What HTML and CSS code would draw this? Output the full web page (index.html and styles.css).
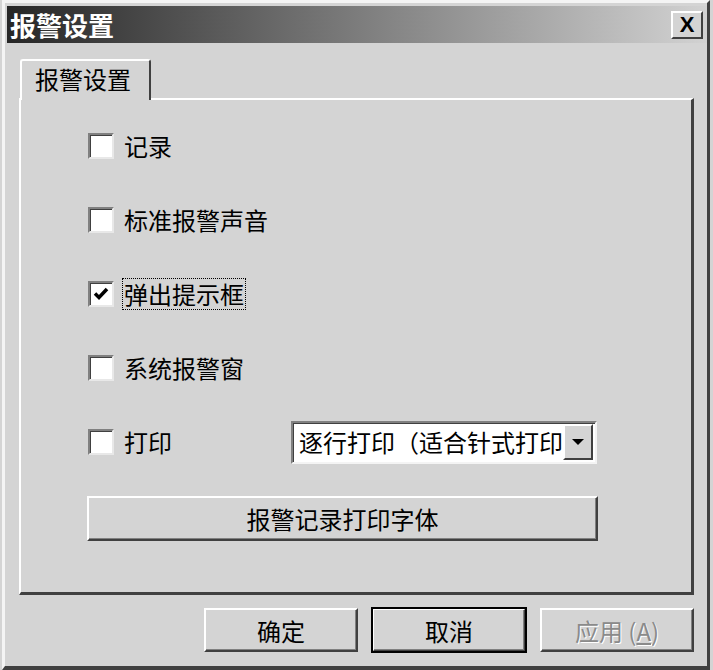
FILE: index.html
```html
<!DOCTYPE html>
<html>

<head>
  <title>报警设置</title>
  <meta charset="utf-8" />
  <link rel="stylesheet" href="styles.css">
</head>

<body>
  <div class="window">
    <div class="titlebar">
      <span class="title-text">报警设置</span>
      <button class="close-button">X</button>
    </div>

    <div class="content">
      <div class="tabs">
        <div class="tab active-tab">报警设置</div>
      </div>

      <div class="panel">
        <div class="row">
          <span class="checkbox"></span>
          <span class="label">记录</span>
        </div>
        <div class="row">
          <span class="checkbox"></span>
          <span class="label">标准报警声音</span>
        </div>
        <div class="row">
          <span class="checkbox checked">
            <svg width="16" height="14" viewBox="0 0 16 14">
              <polyline points="2,6.5 6,10.5 14,2" fill="none" stroke="#000" stroke-width="3.5" />
            </svg>
          </span>
          <span class="label focused">弹出提示框</span>
        </div>
        <div class="row">
          <span class="checkbox"></span>
          <span class="label">系统报警窗</span>
        </div>
        <div class="row">
          <span class="checkbox"></span>
          <span class="label print-label">打印</span>
          <div class="select">
            <span class="select-text">逐行打印（适合针式打印机）</span>
            <span class="select-button">
              <svg width="12" height="7" viewBox="0 0 12 7">
                <path d="M0 0 H12 L6 6 Z" fill="#000" />
              </svg>
            </span>
          </div>
        </div>
        <button class="wide-button">报警记录打印字体</button>
      </div>

      <div class="footer">
        <button class="button">确定</button>
        <button class="button default-button">取消</button>
        <button class="button disabled-button">应用 (<u>A</u>)</button>
      </div>
    </div>
  </div>
</body>

</html>
```

FILE: styles.css
```css
html,
body {
  margin: 0;
  padding: 0;
  background-color: #d4d4d4;
}

body {
  font-family: "Noto Sans CJK SC", "Liberation Sans", sans-serif;
  font-size: 24px;
  color: #000000;
}

.window {
  box-sizing: border-box;
  width: 708px;
  height: 670px;
  margin-left: 2px;
  border-top: 3px solid #f4f4f4;
  border-left: 3px solid #f4f4f4;
  border-right: 3px solid #404040;
  border-bottom: 4px solid #404040;
  padding: 3px 0 0 2px;
  background: #d4d4d4;
}

.titlebar {
  display: flex;
  align-items: center;
  justify-content: space-between;
  height: 37px;
  padding: 0 4px 0 3px;
  background: linear-gradient(to right, #262626 0%, #5a5a5a 30%, #d2d2d2 100%);
}

.title-text {
  color: #ffffff;
  font-size: 26px;
  font-weight: bold;
  line-height: 37px;
}

.close-button {
  box-sizing: border-box;
  width: 32px;
  height: 28px;
  padding: 0;
  background: #d4d4d4;
  border: 2px solid;
  border-color: #ffffff #404040 #404040 #ffffff;
  font-family: "Liberation Sans", sans-serif;
  font-size: 22px;
  font-weight: bold;
  line-height: 22px;
  color: #000000;
}

.content {
  padding: 16px 0 0 12px;
}

.tabs {
  display: flex;
  position: relative;
  z-index: 1;
  margin-left: 1px;
  margin-bottom: -2px;
}

.tab {
  box-sizing: border-box;
  width: 131px;
  height: 41px;
  padding-left: 13px;
  line-height: 36px;
  background: #d4d4d4;
  border-top: 2px solid #ffffff;
  border-left: 2px solid #ffffff;
  border-right: 2px solid #404040;
  border-top-left-radius: 3px;
  border-top-right-radius: 3px;
}

.panel {
  box-sizing: border-box;
  width: 675px;
  height: 497px;
  padding: 9px 0 0 67px;
  border-top: 2px solid #ffffff;
  border-left: 2px solid #ffffff;
  border-right: 3px solid #404040;
  border-bottom: 3px solid #404040;
}

.row {
  display: flex;
  align-items: center;
  height: 74px;
}

.checkbox {
  box-sizing: border-box;
  display: flex;
  align-items: center;
  justify-content: center;
  width: 26px;
  height: 26px;
  background: #ffffff;
  border: 2px solid;
  border-color: #808080 #e8e8e8 #e8e8e8 #808080;
  box-shadow: inset 1px 1px 0 #404040;
}

.label {
  margin-left: 10px;
  line-height: 28px;
}

.focused {
  outline: 1px dotted #000000;
  outline-offset: 1px;
}

.print-label {
  width: 167px;
}

.select {
  box-sizing: border-box;
  display: flex;
  align-items: center;
  width: 306px;
  height: 43px;
  background: #ffffff;
  border: 2px solid;
  border-color: #808080 #f4f4f4 #f4f4f4 #808080;
  box-shadow: inset 1px 1px 0 #404040;
  padding: 0 2px 0 6px;
}

.select-text {
  flex: 1;
  overflow: hidden;
  white-space: nowrap;
  line-height: 36px;
}

.select-button {
  box-sizing: border-box;
  display: flex;
  align-items: center;
  justify-content: center;
  width: 30px;
  height: 36px;
  background: #d4d4d4;
  border: 2px solid;
  border-color: #ffffff #404040 #404040 #ffffff;
}

.wide-button {
  box-sizing: border-box;
  display: block;
  width: 511px;
  height: 45px;
  margin: 17px 0 0 -1px;
  background: #d4d4d4;
  border: 2px solid;
  border-color: #ffffff #404040 #404040 #ffffff;
  box-shadow: inset -1px -1px 0 #808080;
  font-family: "Noto Sans CJK SC", sans-serif;
  font-size: 24px;
  color: #000000;
  padding: 0;
}

.footer {
  display: flex;
  justify-content: flex-end;
  gap: 14px;
  width: 675px;
  padding-top: 13px;
}

.button {
  box-sizing: border-box;
  width: 154px;
  height: 44px;
  padding: 0;
  background: #d4d4d4;
  border: 2px solid;
  border-color: #ffffff #404040 #404040 #ffffff;
  box-shadow: inset -1px -1px 0 #808080;
  font-family: "Noto Sans CJK SC", sans-serif;
  font-size: 24px;
  color: #000000;
}

.default-button {
  outline: 2px solid #000000;
  outline-offset: -1px;
}

.disabled-button {
  color: #8a8a8a;
  text-shadow: 1px 1px 0 #ffffff;
}
```
